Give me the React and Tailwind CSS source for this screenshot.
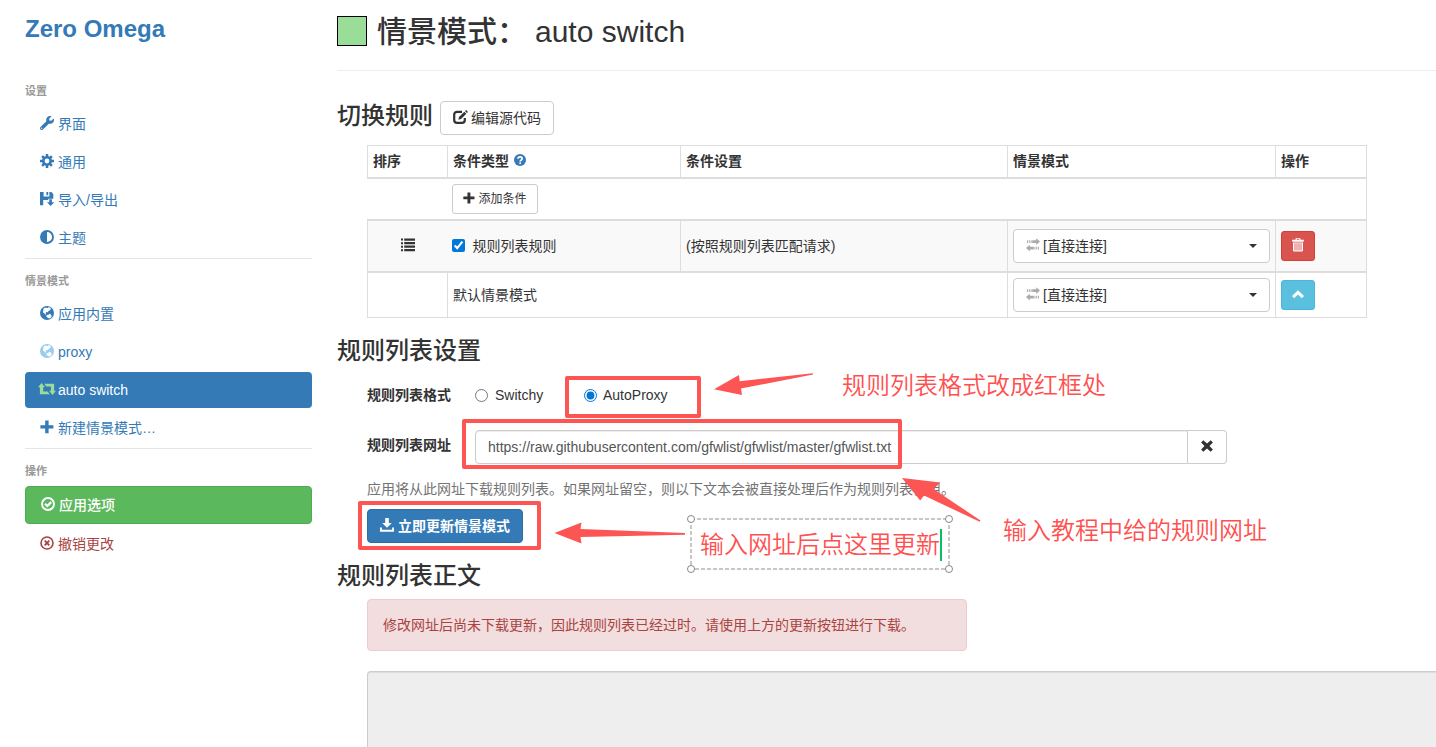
import React from 'react';
import { FaWrench } from 'react-icons/fa';

function Icon({ children, className = 'h-[14px] w-[14px]', box = '0 0 14 14' }) {
  return (
    <svg viewBox={box} className={'mb-[2px] shrink-0 ' + className} fill="currentColor" aria-hidden="true">
      {children}
    </svg>
  );
}

const Cog = () => (
  <Icon>
    <circle cx="7" cy="7" r="3.7" fill="none" stroke="currentColor" strokeWidth="2.6" />
    <path
      d="M7 0v3M7 11v3M0 7h3M11 7h3M2.1 2.1l2 2M9.9 9.9l2 2M2.1 11.9l2-2M9.9 4.1l2-2"
      stroke="currentColor"
      strokeWidth="2.5"
    />
  </Icon>
);

const SaveDown = () => (
  <Icon>
    <path d="M0 0h3.600v4.600h5.800V0h2l1.900 1.900v4.800H8.300v1.200H3.200v5.400H0z" />
    <path d="M6.400 0h1.800v3.200H6.400z" />
    <path d="M9.300 7.200h2.600v3h2.300L10.600 14 7 10.200h2.300z" />
  </Icon>
);

const HalfCircle = () => (
  <Icon>
    <circle cx="7" cy="7" r="6" fill="none" stroke="currentColor" strokeWidth="1.9" />
    <path d="M7 1a6 6 0 0 0 0 12z" />
  </Icon>
);

const Globe = () => (
  <Icon>
    <path
      fillRule="evenodd"
      d="M7 0a7 7 0 1 1 0 14A7 7 0 0 1 7 0zM4.600 1.700 3.200 2.900l.3 1.300-.6 1.300.5 1.600 1.300.5.600 1.200.7-.6-.3-1.500.9-.8 1.200.3.700-1.300 1.500-.6.900-1.500-.9-1.200-1.600-.4-.5.900-1.400-.4zM9.700 7.700 8.400 8.800l-1.700.2-.4 1.400 1.300 1.300 1.800.8 1.900-1 .3-1.800-.7-1.300z"
    />
  </Icon>
);

const Retweet = () => (
  <Icon className="-mx-[2px] h-[12px] w-[18px] text-[#99dd99]" box="0 0 18 12">
    <path d="M3.500 0 7 4.300H5.200v4.100h4.400l2.200 2.800H1.900V4.300H0z" />
    <path d="M14.500 12 11 7.700h1.900V3.600H8.400L6.200.8h9.900v6.900H18z" />
  </Icon>
);

const Plus = ({ className }) => (
  <Icon className={className}>
    <path d="M5.200.6h3.400v4.700h4.800v3.300H8.600v4.700H5.200V8.600H.4V5.300h4.800z" />
  </Icon>
);

const OkCircle = () => (
  <Icon>
    <circle cx="7" cy="7" r="6" fill="none" stroke="currentColor" strokeWidth="1.9" />
    <path d="M3.900 6.800 6.300 9 10.200 5.100" fill="none" stroke="currentColor" strokeWidth="2.200" />
  </Icon>
);

const RemoveCircle = () => (
  <Icon>
    <circle cx="7" cy="7" r="6" fill="none" stroke="currentColor" strokeWidth="1.6" />
    <path d="M4.700 4.700 9.300 9.300M9.300 4.700 4.700 9.300" stroke="currentColor" strokeWidth="1.9" />
  </Icon>
);

const Edit = () => (
  <Icon className="h-[14px] w-[15px]" box="0 0 15 14">
    <path
      d="M9 1.800H4A2.800 2.800 0 0 0 1.200 4.600V10A2.800 2.800 0 0 0 4 12.800h5A2.800 2.800 0 0 0 11.800 10V8"
      fill="none"
      stroke="currentColor"
      strokeWidth="2.200"
    />
    <path d="M5.400 9.700 6 7 11.300 1.700l2 2L8 9zM12 1l1.100-1 1.900 1.900L13.900 3z" />
  </Icon>
);

const Question = () => (
  <Icon className="h-[12px] w-[12px]">
    <circle cx="7" cy="7" r="7" />
    <path d="M4.700 5.600c0-3 4.800-2.800 4.800-.2C9.500 7 7.300 6.900 7.300 8.700" fill="none" stroke="#fff" strokeWidth="2" />
    <path d="M6.200 9.700h2v1.900h-2z" fill="#fff" />
  </Icon>
);

const List = () => (
  <Icon>
    <path d="M0 .6h2v2H0zM3.200.6H14v2.200H3.200zM0 4.200h2v2H0zM3.200 4.100H14v2.200H3.200zM0 7.700h2v2H0zM3.200 7.600H14v2.200H3.200zM0 11.200h2v2H0zM3.200 11.100H14v2.200H3.200z" />
  </Icon>
);

const Transfer = () => (
  <Icon>
    <path d="M1 2.200h1v2.800H1zM2.800 2.200h1v2.800h-1zM4.600 2.200h1v2.800h-1zM6.200 2.200h4V.2L14 3.600 10.200 7v-2h-4z" />
    <path d="M13 8.700h-1v2.800h1zM11.200 8.700h-1v2.800h1zM9.400 8.700h-1v2.800h1zM7.800 8.700h-4v-2L0 10.100l3.800 3.400v-2h4z" />
  </Icon>
);

const Trash = () => (
  <Icon>
    <path fillRule="evenodd" d="M4.600.2h4.800v1.600h3.400v1.900H1.200V1.800h3.400zM5.800 1.200v.7h2.400v-.7z" />
    <path d="M2 4.400h10v7.800a1.300 1.300 0 0 1-1.300 1.300H3.300A1.300 1.300 0 0 1 2 12.200z" />
    <path d="M4 5.200v7.200M6 5.200v7.200M8 5.200v7.200M10 5.200v7.200" stroke="#d9534f" strokeWidth=".9" />
  </Icon>
);

const ChevronUp = () => (
  <Icon>
    <path d="M7 3.200 13 9l-2.100 2.200L7 7.500l-3.900 3.700L1 9z" />
  </Icon>
);

const Download = () => (
  <Icon>
    <path d="M5.200 0h3.600v5h3L7 9.800 2.200 5h3z" />
    <path d="M0 9.600h1.900v2.100h10.200V9.600H14v4.200H0z" />
  </Icon>
);

const Remove = () => (
  <Icon>
    <path d="M3.300 1.200 7 4.600l3.700-3.400 2.200 2.200L9.500 7l3.400 3.600-2.200 2.200L7 9.400l-3.700 3.400-2.200-2.200L4.500 7 1.100 3.400z" />
  </Icon>
);

function NavItem({ icon, children, className = 'text-[#337ab7]' }) {
  return (
    <li>
      <a href="#" className={'flex h-9 items-center gap-1 rounded px-[15px] ' + className}>
        {icon}
        <span>{children}</span>
      </a>
    </li>
  );
}

function NavSection({ title, divided, children }) {
  return (
    <section className={divided ? 'mt-[2px] border-t border-[#e5e5e5] pt-3' : ''}>
      <h2 className="mb-[5px] text-[11px] leading-5 font-bold text-[#999]">{title}</h2>
      <ul className="flex flex-col gap-[2px]">{children}</ul>
    </section>
  );
}

function ProfileSelect({ label }) {
  return (
    <div className="relative flex items-center">
      <select
        aria-label={label}
        className="h-[34px] w-full appearance-none rounded border border-[#ccc] bg-white pr-8 pl-[29px] text-sm text-[#333]"
      >
        <option>[直接连接]</option>
      </select>
      <span className="pointer-events-none absolute left-[13px] text-[#aaa]">
        <Transfer />
      </span>
      <span className="pointer-events-none absolute right-[13px] border-x-4 border-t-4 border-x-transparent border-t-[#333]" />
    </div>
  );
}

const heading = 'text-2xl leading-[26px] font-medium';
const cell = 'border border-[#ddd] px-[5px]';

function Handle({ className }) {
  return <span className={'absolute h-2 w-2 rounded-full border border-[#888] bg-white ' + className} />;
}

function Annotations() {
  return (
    <div className="pointer-events-none absolute top-0 left-0 text-2xl leading-8 font-[350] whitespace-nowrap text-[#ff5050]">
      <div className="absolute top-[376px] left-[565px] h-[42px] w-[136px] rounded-xs border-4 border-[#fd5454]" />
      <div className="absolute top-[419px] left-[462px] h-[50px] w-[440px] rounded-xs border-4 border-[#fd5454]" />
      <div className="absolute top-[501px] left-[358px] h-[49px] w-[183px] rounded-xs border-4 border-[#fd5454]" />
      <svg className="absolute top-0 left-0 h-[600px] w-[1000px]" viewBox="0 0 1000 600" fill="#fd5454" aria-hidden="true">
        <path d="M714 389.300 739 375l.7 6.200L813 373.200v1.400l-72 13.800 1 6.600z" />
        <path d="M554.500 533 581.500 522.500l-1 6.600L685 533v1.700l-104.500 2.200 1 6.600z" />
        <path d="M902 478l38.500 4.500-7 6.500L980.500 520.500l-.8 1.300L924 495.500l-3.800 5z" />
      </svg>
      <p className="absolute top-[370px] left-[842px]">规则列表格式改成红框处</p>
      <p className="absolute top-[515px] left-[1003px]">输入教程中给的规则网址</p>
      <div className="absolute top-[518px] left-[690px] flex h-[52px] w-[260px] items-center pt-[2px] pl-[10px]">
        <svg className="absolute inset-0 h-full w-full" viewBox="0 0 260 52" aria-hidden="true">
          <rect x="1" y="1" width="258" height="50" fill="none" stroke="#c8c8c8" strokeWidth="2" strokeDasharray="4 2" />
        </svg>
        <p>输入网址后点这里更新</p>
        <span className="h-8 w-[2px] bg-[#07c160]" />
        <Handle className="-top-[3px] -left-[3px]" />
        <Handle className="-top-[3px] -right-[3px]" />
        <Handle className="-bottom-[3px] -left-[3px]" />
        <Handle className="-right-[3px] -bottom-[3px]" />
      </div>
    </div>
  );
}

export default function App() {
  return (
    <div className="relative flex h-screen min-h-[740px] overflow-hidden bg-white font-['Liberation_Sans','Noto_Sans_CJK_SC',sans-serif] text-sm leading-5 text-[#333]">
      <nav className="w-[337px] shrink-0 px-[25px] pt-[15px]">
        <a href="#" className="mb-[38px] block text-2xl leading-7 font-bold text-[#337ab7]">
          Zero Omega
        </a>
        <NavSection title="设置">
          <NavItem icon={<FaWrench className="mb-[2px] h-[14px] w-[14px]" />}>界面</NavItem>
          <NavItem icon={<Cog />}>通用</NavItem>
          <NavItem icon={<SaveDown />}>导入/导出</NavItem>
          <NavItem icon={<HalfCircle />}>主题</NavItem>
        </NavSection>
        <NavSection title="情景模式" divided>
          <NavItem icon={<Globe />}>应用内置</NavItem>
          <NavItem
            icon={
              <span className="text-[#99ccee]">
                <Globe />
              </span>
            }
          >
            proxy
          </NavItem>
          <NavItem icon={<Retweet />} className="bg-[#337ab7] text-white">
            auto switch
          </NavItem>
          <NavItem icon={<Plus />}>新建情景模式…</NavItem>
        </NavSection>
        <NavSection title="操作" divided>
          <li>
            <button className="flex h-[38px] w-full items-center gap-1 rounded border border-[#4cae4c] bg-[#5cb85c] px-[15px] font-medium text-white">
              <OkCircle />
              应用选项
            </button>
          </li>
          <NavItem icon={<RemoveCircle />} className="text-[#a94442]">
            撤销更改
          </NavItem>
        </NavSection>
      </nav>

      <main className="flex min-w-0 flex-1 flex-col">
        <header className="flex items-start border-b border-[#eee] pt-4 pb-[22px]">
          <span className="h-[30px] w-[30px] border border-black bg-[#99dd99]" />
          <h1 className="ml-[10px] flex gap-2 text-[30px] leading-[32px] font-medium">
            <span>情景模式：</span>
            <span>auto switch</span>
          </h1>
        </header>

        <div className="mt-[30px] flex items-start gap-[7px]">
          <h3 className="text-2xl leading-[30px] font-medium">切换规则</h3>
          <button className="flex h-[34px] items-center gap-[3px] rounded border border-[#ccc] bg-white px-3">
            <Edit />
            编辑源代码
          </button>
        </div>

        <table className="mt-[10px] ml-[30px] w-[1000px] table-fixed border-collapse text-left">
          <colgroup>
            <col className="w-[80px]" />
            <col className="w-[233px]" />
            <col className="w-[327px]" />
            <col className="w-[268px]" />
            <col />
          </colgroup>
          <thead>
            <tr className="h-[32px]">
              <th className={cell}>排序</th>
              <th className={cell}>
                <span className="flex items-center gap-[5px]">
                  条件类型
                  <a href="#" aria-label="帮助" className="text-[#337ab7]">
                    <Question />
                  </a>
                </span>
              </th>
              <th className={cell}>条件设置</th>
              <th className={cell}>情景模式</th>
              <th className={cell}>操作</th>
            </tr>
          </thead>
          <tbody className="border-t-2 border-[#ddd]">
            <tr className="h-[42px]">
              <td />
              <td colSpan={4} className="border-r border-[#ddd] px-1">
                <button className="flex h-[30px] items-center gap-1 rounded-[3px] border border-[#ccc] bg-white px-[10px] text-xs">
                  <Plus className="h-[12px] w-[12px]" />
                  添加条件
                </button>
              </td>
            </tr>
          </tbody>
          <tbody className="border-t-2 border-[#ddd]">
            <tr className="h-[52px] bg-[#f9f9f9]">
              <td className="border-l border-[#ddd]">
                <span className="flex justify-center">
                  <List />
                </span>
              </td>
              <td className="px-1">
                <label className="flex items-center gap-[8px]">
                  <input type="checkbox" defaultChecked className="h-[13px] w-[13px] accent-[#0078d7]" />
                  规则列表规则
                </label>
              </td>
              <td className={cell}>(按照规则列表匹配请求)</td>
              <td className={cell}>
                <ProfileSelect label="规则列表情景模式" />
              </td>
              <td className={cell}>
                <button
                  aria-label="删除"
                  className="flex h-[30px] w-[34px] items-center justify-center rounded-[3px] border border-[#d43f3a] bg-[#d9534f] text-white"
                >
                  <Trash />
                </button>
              </td>
            </tr>
          </tbody>
          <tbody className="border-t-2 border-[#ddd]">
            <tr className="h-[46px]">
              <td className={cell} />
              <td className={cell} colSpan={2}>
                默认情景模式
              </td>
              <td className={cell}>
                <ProfileSelect label="默认情景模式" />
              </td>
              <td className={cell}>
                <button
                  aria-label="上移"
                  className="flex h-[30px] w-[34px] items-center justify-center rounded-[3px] border border-[#46b8da] bg-[#5bc0de] text-white"
                >
                  <ChevronUp />
                </button>
              </td>
            </tr>
          </tbody>
        </table>

        <h3 className={heading + ' mt-5'}>规则列表设置</h3>
        <form className="mt-[21px] ml-[30px]" onSubmit={(e) => e.preventDefault()}>
          <div className="flex" role="radiogroup" aria-labelledby="format">
            <span id="format" className="w-[108px] font-bold">
              规则列表格式
            </span>
            <label className="flex w-[109px] items-center gap-[7px]">
              <input type="radio" name="format" className="h-[13px] w-[13px] accent-[#0078d7]" />
              Switchy
            </label>
            <label className="flex items-center gap-[6px]">
              <input type="radio" name="format" defaultChecked className="h-[13px] w-[13px] accent-[#0078d7]" />
              AutoProxy
            </label>
          </div>
          <div className="mt-[25px] flex items-start">
            <label htmlFor="url" className="w-[108px] leading-[30px] font-bold">
              规则列表网址
            </label>
            <div className="flex w-[752px]">
              <input
                id="url"
                type="text"
                defaultValue="https://raw.githubusercontent.com/gfwlist/gfwlist/master/gfwlist.txt"
                className="h-[34px] min-w-0 flex-1 rounded-l border border-[#ccc] px-3 text-[#555] shadow-[inset_0_1px_1px_rgba(0,0,0,0.075)]"
              />
              <button
                type="button"
                aria-label="清除"
                className="flex h-[34px] w-[39px] items-center justify-center rounded-r border border-l-0 border-[#ccc] bg-white"
              >
                <Remove />
              </button>
            </div>
          </div>
          <p className="mt-[15px] text-[#737373]">
            应用将从此网址下载规则列表。如果网址留空，则以下文本会被直接处理后作为规则列表使用。
          </p>
          <button
            type="button"
            className="mt-[10px] flex h-[34px] items-center gap-1 rounded border border-[#2e6da4] bg-[#337ab7] px-3 font-bold text-white"
          >
            <Download />
            立即更新情景模式
          </button>
        </form>

        <h3 className={heading + ' mt-5'}>规则列表正文</h3>
        <div role="alert" className="mt-[10px] ml-[30px] w-[600px] rounded border border-[#ebccd1] bg-[#f2dede] p-[15px] text-[#a94442]">
          修改网址后尚未下载更新，因此规则列表已经过时。请使用上方的更新按钮进行下载。
        </div>
        <textarea
          aria-label="规则列表正文"
          readOnly
          className="mt-5 ml-[30px] flex-1 resize-none rounded-tl border-t border-l border-[#ccc] bg-[#eee] shadow-[inset_0_1px_1px_rgba(0,0,0,0.075)]"
        />
      </main>

      <Annotations />
    </div>
  );
}
